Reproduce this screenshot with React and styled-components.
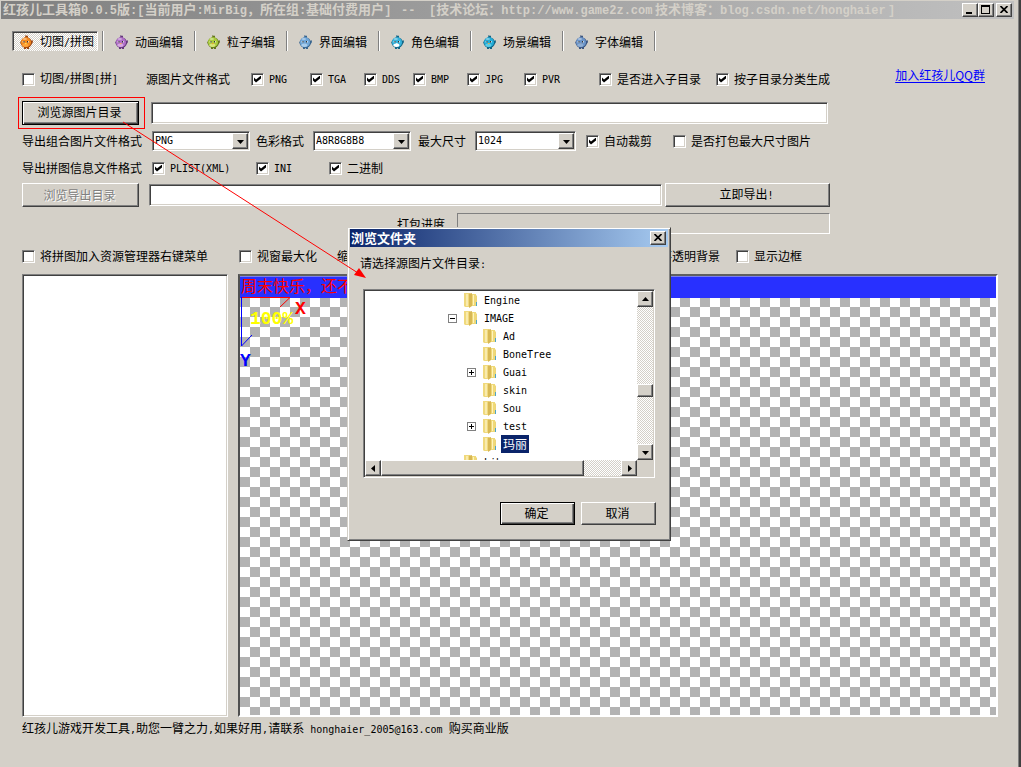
import React from "react";
import styled, { createGlobalStyle, css } from "styled-components";

const face = "#d4d0c8";
const cjk = '"Noto Sans CJK SC", sans-serif';
const mono = '"DejaVu Sans Mono", "Liberation Mono", "Noto Sans CJK SC", monospace';

const Global = createGlobalStyle`
  * { box-sizing: border-box; }
  body { margin: 0; background: ${face}; color: #000; font: 12px/16px ${cjk}; }
  button, input, select { font: inherit; color: inherit; margin: 0; border-radius: 0; }
`;

const raised = css`
  border: 1px solid;
  border-color: #fff #404040 #404040 #fff;
  box-shadow: inset -1px -1px 0 #808080;
  background: ${face};
`;
const sunken = css`
  border: 1px solid;
  border-color: #808080 #fff #fff #808080;
  box-shadow: inset 1px 1px 0 #404040, inset -1px -1px 0 ${face};
  background: #fff;
`;
const dither = css`
  background: repeating-conic-gradient(#fff 0 25%, ${face} 0 50%) 0 0 / 2px 2px;
`;

const Latin = styled.span`
  font-family: ${mono};
  font-size: 10px;
  white-space: pre;
`;
const Mixed = ({ children }) =>
  children
    .split(/([\x20-\x7e]+)/)
    .filter(Boolean)
    .map((part, i) => (/^[\x20-\x7e]/.test(part) ? <Latin key={i}>{part}</Latin> : part));

const Window = styled.div`
  position: relative;
  display: flex;
  flex-direction: column;
  min-height: 100vh;
  padding: 1px 0 32px;
  background: ${face};
  border-right: 2px solid #404040;
  box-shadow: inset -1px 0 0 #808080;
  white-space: nowrap;
  overflow: hidden;
`;

const TitleBar = styled.header`
  display: flex;
  align-items: center;
  height: 18px;
  margin: 0 5px 0 1px;
  padding: 0 2px;
  background: linear-gradient(90deg, #808080, #c0c0c0);
  color: ${face};
  font-weight: bold;
  font-size: 13px;
  ${Latin} { font-family: "Liberation Mono", monospace; font-size: 12px; }
`;
const TitlePart = styled.span`
  flex: none;
  width: ${(p) => p.$w}px;
`;
const Caption = styled.div`
  display: flex;
  margin-left: auto;
`;
const CaptionButton = styled.button`
  ${raised}
  display: flex;
  align-items: center;
  justify-content: center;
  width: 16px;
  height: 14px;
  padding: 0 1px 1px 0;
  margin-left: ${(p) => (p.$gap ? 2 : 0)}px;
`;

const Tabs = styled.nav`
  display: flex;
  height: 20px;
  margin: 12px 0 0 12px;
`;
const Tab = styled.button`
  display: flex;
  align-items: center;
  gap: 7px;
  width: 92px;
  padding: 2px 0 0 11px;
  border: 0;
  border-right: 1px solid #fff;
  box-shadow: inset -1px 0 0 #808080;
  background: none;
  white-space: nowrap;
  ${(p) =>
    p.$active &&
    css`
      ${dither}
      width: 86px;
      padding-left: 7px;
      border: 1px solid;
      border-color: #808080 #fff transparent #808080;
      box-shadow: inset 1px 1px 0 #404040;
    `}
`;
const TabGap = styled.i`
  width: 6px;
  border-right: 1px solid #fff;
  box-shadow: inset -1px 0 0 #808080;
`;

const Row = styled.div`
  display: flex;
  align-items: center;
  flex: none;
  height: ${(p) => p.$h || 20}px;
  margin-top: ${(p) => p.$mt}px;
  padding-left: 22px;
`;
const FormRow = styled(Row)`
  max-width: 830px;
`;
const Cell = styled.span`
  flex: none;
  width: ${(p) => p.$w}px;
`;
const CheckLabel = styled.label`
  display: flex;
  align-items: center;
  flex: none;
  gap: 5px;
  width: ${(p) => p.$w}px;
`;
const Check = styled.input.attrs({ type: "checkbox" })`
  ${sunken}
  appearance: none;
  position: relative;
  flex: none;
  width: 13px;
  height: 13px;
  &:checked::after {
    content: "";
    position: absolute;
    left: 2px;
    top: 2px;
    width: 7px;
    height: 7px;
    background: #000;
    clip-path: polygon(0 2px, 2px 4px, 7px 0, 7px 3px, 2px 7px, 0 5px);
  }
`;
const Option = ({ w, on, children }) => (
  <CheckLabel $w={w}>
    <Check defaultChecked={on} />
    <span><Mixed>{children}</Mixed></span>
  </CheckLabel>
);

const Link = styled.a`
  align-self: flex-start;
  margin-left: auto;
  margin-right: 34px;
  line-height: 12px;
  color: #00f;
  text-underline-offset: 2px;
`;

const Button = styled.button`
  ${raised}
  flex: none;
  width: ${(p) => p.$w}px;
  height: ${(p) => p.$h || 24}px;
  padding: 0 2px 1px 0;
  ${(p) =>
    p.$default &&
    css`
      border-color: #000;
      box-shadow: inset 1px 1px 0 #fff, inset -1px -1px 0 #404040, inset -2px -2px 0 #808080;
    `}
  &:disabled { color: #808080; text-shadow: 1px 1px 0 #fff; }
`;
const TextBox = styled.input`
  ${sunken}
  flex: 1;
  min-width: 0;
  height: ${(p) => p.$h || 22}px;
  margin: 0 ${(p) => p.$mr || 0}px 0 ${(p) => p.$ml}px;
  padding: 0 4px;
`;

const Combo = styled.span`
  position: relative;
  flex: none;
  width: ${(p) => p.$w}px;
  margin-right: ${(p) => p.$mr}px;
  height: 20px;
`;
const Select = styled.select`
  ${sunken}
  appearance: none;
  display: block;
  width: 100%;
  height: 100%;
  padding: 0 2px;
  font-family: ${mono};
  font-size: 10px;
`;
const ComboArrow = styled.span`
  ${raised}
  position: absolute;
  right: 2px;
  top: 2px;
  display: flex;
  align-items: center;
  justify-content: center;
  width: 16px;
  height: 16px;
  pointer-events: none;
`;
const Triangle = ({ dir = "down" }) => {
  const d = { down: "M0 2H7L3.5 6Z", up: "M0 5H7L3.5 1Z", left: "M5 0V7L1 3.5Z", right: "M2 0V7L6 3.5Z" }[dir];
  return <svg width="7" height="7" aria-hidden="true"><path d={d} /></svg>;
};
const Dropdown = ({ w, mr, value, label }) => (
  <Combo $w={w} $mr={mr}>
    <Select aria-label={label} defaultValue={value}><option>{value}</option></Select>
    <ComboArrow><Triangle /></ComboArrow>
  </Combo>
);

const Progress = styled.div`
  flex: 1;
  height: 21px;
  border: 1px solid;
  border-color: #808080 #fff #fff #808080;
`;

const Panels = styled.main`
  display: flex;
  flex: 1;
  gap: 10px;
  margin: 8px 21px 0 22px;
`;
const ListPanel = styled.section`
  ${sunken}
  flex: none;
  width: 206px;
`;
const Canvas = styled.section`
  position: relative;
  flex: 1;
  overflow: hidden;
  border: 2px solid;
  border-color: #606060 #fff #fff #505050;
  background: conic-gradient(#fff 25%, #b3b3b3 0 50%, #fff 0 75%, #b3b3b3 0) 0 1px / 20px 20px;
`;
const Banner = styled.div`
  height: 22px;
  padding-left: 1px;
  border-top: 1px solid #7a80f0;
  background: #2830ff;
  color: #f00;
  font-size: 16px;
  line-height: 16px;
`;
const Axes = styled.svg`
  position: absolute;
  left: 0;
  top: 20px;
`;
const Mark = styled.span`
  position: absolute;
  left: ${(p) => p.$x}px;
  top: ${(p) => p.$y}px;
  color: ${(p) => p.$c};
  font: bold 18px/18px "Liberation Mono", monospace;
`;
const Footer = styled.footer`
  height: 18px;
  padding: 3px 0 0 22px;
`;

const Dialog = styled.section`
  position: absolute;
  left: 347px;
  top: 227px;
  width: 324px;
  height: 314px;
  padding: 1px 2px;
  background: ${face};
  border: 1px solid;
  border-color: ${face} #404040 #404040 ${face};
  box-shadow: inset 1px 1px 0 #fff, inset -1px -1px 0 #808080;
`;
const DialogTitle = styled.div`
  display: flex;
  align-items: center;
  justify-content: space-between;
  height: 18px;
  padding: 0 2px 0 1px;
  background: linear-gradient(90deg, #0a246a, #a6caf0);
  color: #fff;
  font-weight: bold;
  font-size: 13px;
  button { color: #000; }
`;
const Prompt = styled.p`
  margin: 8px 0 0 10px;
`;
const TreeBox = styled.div`
  ${sunken}
  display: grid;
  grid-template-columns: 1fr 16px;
  grid-template-rows: 1fr 16px;
  width: 292px;
  height: 189px;
  margin: 16px 0 0 13px;
  padding: 1px;
`;
const Tree = styled.ul`
  margin: 0;
  padding: 0;
  list-style: none;
  overflow: hidden;
  min-height: 0;
`;
const TreeItem = styled.li`
  display: flex;
  align-items: center;
  height: 18px;
  padding-left: ${(p) => (p.$level === 1 ? 83 : 102)}px;
`;
const Expander = styled.span`
  display: flex;
  width: 16px;
`;
const Name = styled.span`
  margin-left: 4px;
  padding: 0 2px;
  line-height: 18px;
  ${(p) => p.$selected && "background: #0a246a; color: #fff;"}
`;
const Scroll = styled.div`
  ${dither}
  display: flex;
  flex-direction: ${(p) => (p.$v ? "column" : "row")};
`;
const ScrollButton = styled.button`
  ${raised}
  display: flex;
  align-items: center;
  justify-content: center;
  flex: none;
  width: 16px;
  height: 16px;
  padding: 0;
`;
const Thumb = styled.div`
  ${raised}
  flex: none;
  width: ${(p) => p.$w}px;
  height: ${(p) => p.$h}px;
`;
const Space = styled.i`
  flex: ${(p) => p.$grow};
`;
const Corner = styled.div`
  background: ${face};
`;
const DialogActions = styled.div`
  display: flex;
  justify-content: flex-end;
  gap: 6px;
  margin: 24px 12px 0 0;
`;
const Annotation = styled.svg`
  position: absolute;
  left: 0;
  top: 0;
  width: 100%;
  height: 100%;
  pointer-events: none;
`;

const Bird = ({ c, dark, belly, beak }) => (
  <svg width="13" height="14" viewBox="0 0 13 14" aria-hidden="true">
    <path d="M5 3L5.500 0L7 1L8 0.500L8 3Z" fill={dark} />
    <path d="M10 7L12.500 5L13 7L11.500 9.500ZM1.500 7L0 6.500L1 9.500Z" fill={dark} />
    <path d="M4 12H6V14H4ZM7 12H9V14H7Z" fill={dark} />
    <ellipse cx="6.300" cy="7.700" rx="5.500" ry="5.500" fill={dark} />
    <ellipse cx="6" cy="7.200" rx="5" ry="5" fill={c} />
    <ellipse cx="5.400" cy="10.300" rx="3" ry="1.700" fill={belly} />
    <ellipse cx="4.800" cy="4" rx="2.200" ry="1" fill="#fff" opacity=".4" />
    <path d="M2.500 6h2v1.500h-2zM7 6h2v1.500h-2z" fill="#fff" opacity=".6" />
    <path d="M3.500 6h1v1.500h-1zM7 6h1v1.500h-1z" fill="#333" />
    <path d="M4.500 8H7L5.700 9.500Z" fill={beak} />
  </svg>
);

const Folder = () => (
  <svg width="14" height="16" viewBox="0 0 14 16" aria-hidden="true">
    <path d="M1 1H6L7 2H11L13 4V14H1Z" fill="#ecd478" />
    <path d="M0 1H5V15H1L0 14Z" fill="#f0d97c" />
    <path d="M2 2H4V14H2Z" fill="#f9ebae" />
    <path d="M5 2L8 1V14L5 16Z" fill="#d8b854" />
    <path d="M8 2H12V14H8Z" fill="#efd978" />
    <path d="M9 3H10V13H9Z" fill="#fff3bd" />
    <path d="M12 10H13V14H12Z" fill="#4da3c7" />
  </svg>
);

const Toggle = ({ open }) => (
  <svg width="9" height="9" aria-hidden="true" shapeRendering="crispEdges">
    <rect x="0.5" y="0.5" width="8" height="8" fill="#fff" stroke="#808080" />
    <path d={open ? "M2 4h5v1h-5z" : "M2 4h5v1h-5zM4 2h1v5h-1z"} />
  </svg>
);

const CloseGlyph = () => (
  <svg width="8" height="7" aria-hidden="true"><path d="M0.500 0L7.500 7M7.500 0L0.500 7" stroke="#000" strokeWidth="1.700" /></svg>
);

const tabs = [
  ["切图/拼图", "#f48a20", "#9c4510", "#ffa33a", "#ffe05a"],
  ["动画编辑", "#b070c8", "#65377c", "#d8a8e4", "#f5b052"],
  ["粒子编辑", "#a9cb3c", "#63761c", "#d7e77a", "#f0a030"],
  ["界面编辑", "#6fa6d8", "#38658f", "#a9cdec", "#8cb4d8"],
  ["角色编辑", "#35b3dc", "#146686", "#ffffff", "#e0f4fb"],
  ["场景编辑", "#22acd8", "#126484", "#56cce8", "#f0b040"],
  ["字体编辑", "#6b94c8", "#3b5580", "#8eaed4", "#90a0b8"],
];

const folders = [
  { name: "Engine", level: 1 },
  { name: "IMAGE", level: 1, toggle: "open" },
  { name: "Ad", level: 2 },
  { name: "BoneTree", level: 2 },
  { name: "Guai", level: 2, toggle: "closed" },
  { name: "skin", level: 2 },
  { name: "Sou", level: 2 },
  { name: "test", level: 2, toggle: "closed" },
  { name: "玛丽", level: 2, selected: true },
  { name: "Lib", level: 1 },
];

function BrowseDialog() {
  return (
    <Dialog role="dialog" aria-label="浏览文件夹">
      <DialogTitle>
        浏览文件夹
        <CaptionButton aria-label="关闭"><CloseGlyph /></CaptionButton>
      </DialogTitle>
      <Prompt><Mixed>请选择源图片文件目录:</Mixed></Prompt>
      <TreeBox>
        <Tree>
          {folders.map((f) => (
            <TreeItem key={f.name} $level={f.level}>
              <Expander>{f.toggle && <Toggle open={f.toggle === "open"} />}</Expander>
              <Folder />
              <Name $selected={f.selected}><Mixed>{f.name}</Mixed></Name>
            </TreeItem>
          ))}
        </Tree>
        <Scroll $v>
          <ScrollButton aria-label="向上"><Triangle dir="up" /></ScrollButton>
          <Space $grow={78} />
          <Thumb $w={16} $h={13} />
          <Space $grow={48} />
          <ScrollButton aria-label="向下"><Triangle /></ScrollButton>
        </Scroll>
        <Scroll>
          <ScrollButton aria-label="向左"><Triangle dir="left" /></ScrollButton>
          <Thumb $w={203} $h={16} />
          <Space $grow={1} />
          <ScrollButton aria-label="向右"><Triangle dir="right" /></ScrollButton>
        </Scroll>
        <Corner />
      </TreeBox>
      <DialogActions>
        <Button $w={75} $h={23} $default>确定</Button>
        <Button $w={75} $h={23}>取消</Button>
      </DialogActions>
    </Dialog>
  );
}

export default function App() {
  return (
    <Window>
      <Global />
      <TitleBar>
        <TitlePart $w={398}><Mixed>红孩儿工具箱0.0.5版:[当前用户:MirBig，所在组:基础付费用户]</Mixed></TitlePart>
        <TitlePart $w={28}><Mixed>--</Mixed></TitlePart>
        <TitlePart $w={226}><Mixed>[技术论坛：http://www.game2z.com</Mixed></TitlePart>
        <TitlePart $w={233}><Mixed>技术博客：blog.csdn.net/honghaier</Mixed></TitlePart>
        <TitlePart $w={8}><Mixed>]</Mixed></TitlePart>
        <Caption>
          <CaptionButton aria-label="最小化"><svg width="8" height="8"><path d="M0 6h6v2h-6z" /></svg></CaptionButton>
          <CaptionButton aria-label="最大化">
            <svg width="9" height="9" shapeRendering="crispEdges"><path d="M0 0h9v9h-9zM1 2v6h7v-6z" fillRule="evenodd" /></svg>
          </CaptionButton>
          <CaptionButton aria-label="关闭" $gap><CloseGlyph /></CaptionButton>
        </Caption>
      </TitleBar>

      <Tabs>
        {tabs.map(([name, c, dark, belly, beak], i) => (
          <React.Fragment key={name}>
            <Tab $active={i === 0}>
              <Bird c={c} dark={dark} belly={belly} beak={beak} />
              <span><Mixed>{name}</Mixed></span>
            </Tab>
            {i === 0 && <TabGap />}
          </React.Fragment>
        ))}
      </Tabs>

      <Row $mt={18}>
        <Option w={124}>切图/拼图[拼]</Option>
        <Cell $w={105}>源图片文件格式</Cell>
        <Option w={59} on>PNG</Option>
        <Option w={54} on>TGA</Option>
        <Option w={49} on>DDS</Option>
        <Option w={54} on>BMP</Option>
        <Option w={57} on>JPG</Option>
        <Option w={75} on>PVR</Option>
        <Option w={117} on>是否进入子目录</Option>
        <Option w={114} on>按子目录分类生成</Option>
        <Link href="#qq">加入红孩儿QQ群</Link>
      </Row>

      <FormRow $mt={8} $h={31}>
        <Button $w={117} $default>浏览源图片目录</Button>
        <TextBox aria-label="源图片目录" $ml={12} $mr={2} />
      </FormRow>

      <FormRow $mt={3}>
        <Cell $w={130}>导出组合图片文件格式</Cell>
        <Dropdown w={98} mr={6} value="PNG" label="导出组合图片文件格式" />
        <Cell $w={57}>色彩格式</Cell>
        <Dropdown w={98} mr={7} value="A8R8G8B8" label="色彩格式" />
        <Cell $w={57}>最大尺寸</Cell>
        <Dropdown w={101} mr={10} value="1024" label="最大尺寸" />
        <Option w={87} on>自动裁剪</Option>
        <Option w={140}>是否打包最大尺寸图片</Option>
      </FormRow>

      <FormRow $mt={7}>
        <Cell $w={130}>导出拼图信息文件格式</Cell>
        <Option w={104} on>PLIST(XML)</Option>
        <Option w={73} on>INI</Option>
        <Option w={60} on>二进制</Option>
      </FormRow>

      <FormRow $mt={4} $h={26}>
        <Button $w={117} disabled>浏览导出目录</Button>
        <TextBox aria-label="导出目录" $ml={10} $mr={3} />
        <Button $w={165}><Mixed>立即导出!</Mixed></Button>
      </FormRow>

      <FormRow $mt={5} $h={21}>
        <Cell $w={375} />
        <Cell $w={60}>打包进度</Cell>
        <Progress role="progressbar" aria-label="打包进度" />
      </FormRow>

      <Row $mt={12}>
        <Option w={217}>将拼图加入资源管理器右键菜单</Option>
        <Option w={98}>视窗最大化</Option>
        <Cell $w={305}>缩放</Cell>
        <Option w={94}>不透明背景</Option>
        <Option w={70}>显示边框</Option>
      </Row>

      <Panels>
        <ListPanel />
        <Canvas>
          <Banner>周末快乐，还不</Banner>
          <Axes width="60" height="60" fill="none">
            <path d="M1 1.500H50L40 11" stroke="#f00" />
            <path d="M1.500 1V50L12 39" stroke="#00f" />
          </Axes>
          <Mark $x={55} $y={24} $c="#f00">X</Mark>
          <Mark $x={0} $y={76} $c="#00f">Y</Mark>
          <Mark $x={10} $y={34} $c="#ff0">100%</Mark>
        </Canvas>
      </Panels>
      <Footer><Mixed>红孩儿游戏开发工具,助您一臂之力,如果好用,请联系 honghaier_2005@163.com 购买商业版</Mixed></Footer>

      <BrowseDialog />

      <Annotation aria-hidden="true">
        <rect x="18.5" y="97.5" width="126" height="31" fill="none" stroke="#f00" />
        <path d="M123 122L358 273" stroke="#f00" />
        <path d="M366 278L354 275L359 268Z" fill="#f00" />
      </Annotation>
    </Window>
  );
}
